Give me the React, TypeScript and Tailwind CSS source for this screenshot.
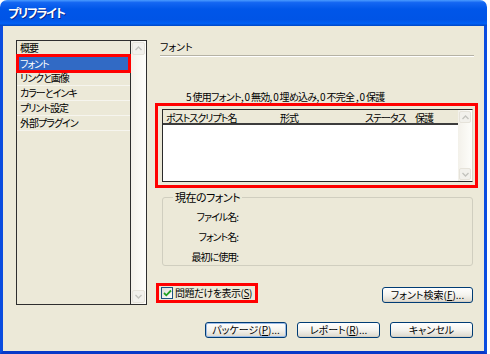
import React from "react";

const ChevUp = () => (
  <svg width="7" height="5" viewBox="0 0 7 5">
    <path d="M0.5 4 L3.5 1 L6.5 4" fill="none" stroke="#C3C3BE" strokeWidth="1.4" />
  </svg>
);
const ChevDown = () => (
  <svg width="7" height="5" viewBox="0 0 7 5">
    <path d="M0.5 1 L3.5 4 L6.5 1" fill="none" stroke="#C3C3BE" strokeWidth="1.4" />
  </svg>
);

function ScrollBar({ btn }: { btn: string }) {
  return (
    <div className="flex h-full w-full flex-col justify-between bg-gradient-to-r from-[#F3F1EA] to-[#FEFEFB] p-[1px]">
      <div className={`flex ${btn} items-center justify-center rounded-[2px] border border-[#E6E3DA] bg-[#F2F1EC]`}>
        <ChevUp />
      </div>
      <div className={`flex ${btn} items-center justify-center rounded-[2px] border border-[#E6E3DA] bg-[#F2F1EC]`}>
        <ChevDown />
      </div>
    </div>
  );
}

function Button({ children, focus }: { children: React.ReactNode; focus?: boolean }) {
  return (
    <div
      className={`flex h-[16px] items-center justify-center rounded-[3px] border border-[#003C74] bg-gradient-to-b from-[#FFFFFF] via-[#F4F3EE] to-[#DCD8CC] text-[10px] leading-[12px] tracking-[0px] text-black ${
        focus ? "shadow-[inset_0_0_0_1px_#9DBCE8]" : "shadow-[inset_0_-1px_0_#D6D0C5]"
      }`}
    >
      {children}
    </div>
  );
}

export default function App() {
  const items = ["概要", "フォント", "リンクと画像", "カラーとインキ", "プリント設定", "外部プラグイン"];
  return (
    <div className="h-[354px] w-[490px] bg-white font-['Noto_Sans_CJK_JP',sans-serif] text-[10px] tracking-[-1px] text-black [font-feature-settings:'palt']">
      <div className="flex h-full w-[487px] flex-col">
        {/* Title bar */}
        <div className="flex h-[26px] items-center rounded-t-[7px] bg-[linear-gradient(to_bottom,#4A9BFF_0%,#1466F2_10%,#0056E9_35%,#0054E6_75%,#0160F5_90%,#0047C4_100%)] pl-[8px]">
          <span className="text-[12px] font-bold leading-[14px] tracking-[-1.2px] text-white [text-shadow:1px_1px_0_#0A2A8C]">
            プリフライト
          </span>
        </div>
        {/* Body */}
        <div className="flex flex-1 border-x-[3px] border-b-[3px] border-x-[#0A4CDF] border-b-[#0838C8] bg-[#ECE9D8] pl-[13px] pt-[14px]">
          {/* Left list */}
          <div className="flex h-[265px] w-[131px] border border-[#2E2E2E] bg-[#ECE9D8]">
            <div className="flex w-[114px] flex-col">
              {items.map((t, i) => (
                <div
                  key={t}
                  className={`relative flex h-[15px] items-center pl-[3px] leading-[12px] ${
                    i === 1 ? "bg-[#316AC5] text-white" : "border-b border-[#F6F5EF]"
                  }`}
                >
                  {t}
                  {i === 1 && (
                    <div className="absolute -bottom-[2px] -left-[1px] -right-[1px] -top-[2px] border-[3px] border-[#FF0000]" />
                  )}
                </div>
              ))}
            </div>
            <div className="ml-auto h-full w-[16px] border-l border-[#2E2E2E]">
              <ScrollBar btn="h-[13px]" />
            </div>
          </div>

          {/* Right column */}
          <div className="ml-[8px] flex w-[323px] flex-col">
            <div className="h-[14px] pl-[5px] leading-[14px] tracking-[0px]">フォント</div>
            <div className="ml-[5px] mt-[1px] h-[2px] w-[314px] border-b border-t border-b-white border-t-[#B5B2A5]" />
            <div className="mt-[34px] h-[12px] pl-[31px] leading-[12px] tracking-[-0.7px]">
              5 使用フォント, 0 無効, 0 埋め込み, 0 不完全 , 0 保護
            </div>
            {/* Red box with list view */}
            <div className="h-[85px] w-[323px] border-[3px] border-[#FF0000] pb-[3px] pl-[4px] pr-[2px] pt-[3px]">
              <div className="flex h-[73px] w-[311px] border border-[#2A2A2A] border-r-[#D8D5C8] bg-white">
                <div className="flex flex-1 flex-col">
                  <div className="relative h-[15px] border-b-2 border-[#3C3C3C] bg-[#ECE9D8] leading-[13px]">
                    <span className="absolute left-[3px] top-[1px]">ポストスクリプト名</span>
                    <span className="absolute left-[117px] top-[1px]">形式</span>
                    <span className="absolute left-[202px] top-[1px]">ステータス</span>
                    <span className="absolute left-[252px] top-[1px]">保護</span>
                  </div>
                  <div className="flex-1 bg-white" />
                </div>
                <div className="h-full w-[14px]">
                  <ScrollBar btn="h-[12px]" />
                </div>
              </div>
            </div>
            {/* Group box */}
            <div className="relative ml-[7px] mt-[9px] h-[69px] w-[311px] rounded-[3px] border border-[#D0CEBF]">
              <span className="absolute -top-[8px] left-[10px] bg-[#ECE9D8] px-[2px] text-[11px] leading-[14px] tracking-[-0.5px]">
                現在のフォント
              </span>
              <div className="flex flex-col pt-[8px]">
                <div className="flex h-[20px] w-[75px] items-center justify-end">ファイル名:</div>
                <div className="flex h-[20px] w-[75px] items-center justify-end">フォント名:</div>
                <div className="flex h-[20px] w-[75px] items-center justify-end">最初に使用:</div>
              </div>
            </div>
            {/* Checkbox row */}
            <div className="mt-[17px] flex h-[20px] items-start">
              <div className="ml-[1px] flex h-[20px] w-[102px] items-center border-[3px] border-[#FF0000] pl-[2px]">
                <div className="flex h-[12px] w-[12px] shrink-0 items-center justify-center border border-[#1C5180] bg-gradient-to-br from-[#DCDCD7] to-white">
                  <svg width="9" height="8" viewBox="0 0 9 8">
                    <path d="M1 4 L3.3 6.3 L8 1.5" fill="none" stroke="#21A121" strokeWidth="1.8" />
                  </svg>
                </div>
                <span className="ml-[2px] whitespace-nowrap leading-[12px] tracking-[-0.5px]">
                  問題だけを表示(<u>S</u>)
                </span>
              </div>
              <div className="ml-auto mr-[5px] mt-[4px] w-[91px]">
                <Button>
                  フォント検索(<u>F</u>)...
                </Button>
              </div>
            </div>
            {/* Bottom buttons */}
            <div className="mt-[19px] flex justify-end gap-[10px] pr-[5px]">
              <div className="w-[82px]">
                <Button focus>
                  パッケージ(<u>P</u>)...
                </Button>
              </div>
              <div className="w-[83px]">
                <Button>
                  レポート(<u>R</u>)...
                </Button>
              </div>
              <div className="w-[83px]">
                <Button>キャンセル</Button>
              </div>
            </div>
          </div>
        </div>
      </div>
    </div>
  );
}
